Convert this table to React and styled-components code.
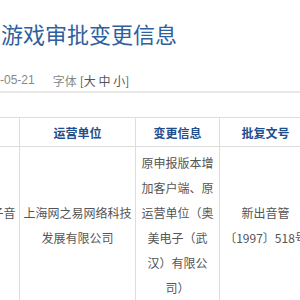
import React from 'react';
import styled, { createGlobalStyle } from 'styled-components';

const GlobalStyle = createGlobalStyle`
  html, body {
    margin: 0;
    padding: 0;
    background: #fff;
    overflow: hidden;
  }
  body {
    font-family: "Noto Sans CJK SC", "Noto Sans", sans-serif;
  }
`;

const Page = styled.div`
  width: 300px;
  height: 300px;
  overflow: hidden;
`;

const Title = styled.h1`
  margin: 18px 0 0 1px;
  font-size: 22px;
  line-height: 30px;
  font-weight: normal;
  color: #2f5f9e;
  white-space: nowrap;
`;

const Meta = styled.div`
  display: flex;
  align-items: center;
  margin-top: 22px;
  height: 20px;
  padding-bottom: 1px;
  border-bottom: 2px solid #e8e8e8;
  font-size: 12px;
  color: #888;
  white-space: nowrap;
`;

const DateText = styled.span`
  font-family: "Liberation Sans", Arial, sans-serif;
  margin-right: 18px;
`;

const SizeLinks = styled.span`
  margin-left: 3px;
  color: #555;
`;

const Table = styled.table`
  margin: 24px 0 0 -73px;
  border-collapse: collapse;
  table-layout: fixed;
  width: 384px;
  font-size: 12px;
`;

const Head = styled.th`
  height: 28px;
  padding: 0 3px;
  border: 1px solid #dedede;
  color: #1f4e8c;
  font-weight: bold;
  text-align: center;
`;

const Cell = styled.td`
  padding: 3px ${p => p.$pad || 3}px;
  border: 1px solid #dedede;
  color: #555;
  line-height: 25px;
  text-align: center;
  vertical-align: middle;
`;

const Line = styled.span`
  display: block;
  white-space: nowrap;
`;

export default function App() {
  return (
    <Page lang="zh-CN">
      <GlobalStyle />
      <Title>游戏审批变更信息</Title>
      <Meta>
        <DateText>-05-21</DateText>
        字体<SizeLinks>[大 中 小]</SizeLinks>
      </Meta>
      <Table>
        <colgroup>
          <col style={{ width: 92 }} />
          <col style={{ width: 116 }} />
          <col style={{ width: 84 }} />
          <col style={{ width: 92 }} />
        </colgroup>
        <thead>
          <tr>
            <Head>出版单位</Head>
            <Head>运营单位</Head>
            <Head>变更信息</Head>
            <Head>批复文号</Head>
          </tr>
        </thead>
        <tbody>
          <tr>
            <Cell>
              <Line>北京金盘电子音</Line>
              <Line>像出版社</Line>
            </Cell>
            <Cell>上海网之易网络科技发展有限公司</Cell>
            <Cell $pad={5}>原申报版本增加客户端、原运营单位（奥美电子（武汉）有限公司）</Cell>
            <Cell>
              <Line>新出音管</Line>
              <Line>〔1997〕518号</Line>
            </Cell>
          </tr>
        </tbody>
      </Table>
    </Page>
  );
}
